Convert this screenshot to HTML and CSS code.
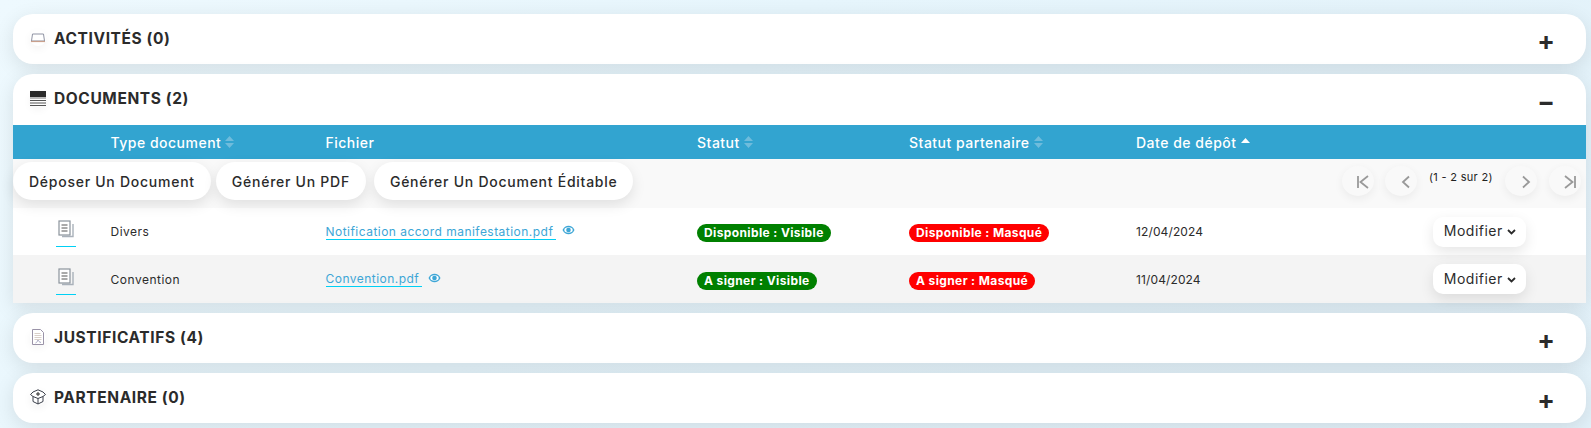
FILE: index.html
```html
<!DOCTYPE html>
<html lang="fr">
<head>
<meta charset="utf-8">
<title>Dossier</title>
<link rel="stylesheet" href="styles.css">
</head>
<body>
<main class="page">
  <section class="card">
    <header class="card-head">
      <span class="head-icon"><svg width="16" height="12" viewBox="0 0 16 12"><path d="M2.500 2h11l1 7h-13z" fill="#fff" stroke="#8f93a3" stroke-width="1"/><path d="M1 9.500h14" stroke="#c9a08c" stroke-width="1.200"/></svg></span>
      <h2 class="card-title">ACTIVITÉS (0)</h2>
      <span class="toggle">+</span>
    </header>
  </section>

  <section class="card card-open">
    <header class="card-head card-head-open">
      <span class="head-icon"><svg width="16" height="16" viewBox="0 0 16 16"><rect y="0" width="16" height="6" fill="#2b2b2b"/><rect y="6" width="16" height="2" fill="#bbb"/><path d="M0 9.500h16M0 12h16M0 14.500h16" stroke="#555" stroke-width="1"/></svg></span>
      <h2 class="card-title">DOCUMENTS (2)</h2>
      <span class="toggle toggle-minus">−</span>
    </header>
    <div class="grid table-head">
      <span></span>
      <span class="th">Type document <svg class="sort" width="9" height="12" viewBox="0 0 9 12"><path d="M4.500 0 9 5H0zM4.500 12 0 7h9z"/></svg></span>
      <span class="th">Fichier</span>
      <span class="th">Statut <svg class="sort" width="9" height="12" viewBox="0 0 9 12"><path d="M4.500 0 9 5H0zM4.500 12 0 7h9z"/></svg></span>
      <span class="th">Statut partenaire <svg class="sort" width="9" height="12" viewBox="0 0 9 12"><path d="M4.500 0 9 5H0zM4.500 12 0 7h9z"/></svg></span>
      <span class="th">Date de dépôt <svg class="sort-on" width="9" height="5" viewBox="0 0 9 5"><path d="M4.500 0 9 5H0z"/></svg></span>
    </div>
    <div class="toolbar">
      <div class="actions">
        <button class="btn">Déposer Un Document</button>
        <button class="btn">Générer Un PDF</button>
        <button class="btn btn-c">Générer Un Document Éditable</button>
      </div>
      <div class="pager">
        <span class="page-btn"><svg width="14" height="14" viewBox="0 0 14 14"><path d="M2 1v12M12 1 4.500 7l7.500 6" fill="none" stroke="#999" stroke-width="1.800"/></svg></span>
        <span class="page-btn"><svg width="14" height="14" viewBox="0 0 14 14"><path d="M10 1.500 4 7l6 5.500" fill="none" stroke="#999" stroke-width="1.800"/></svg></span>
        <span class="page-info">(1 - 2 sur 2)</span>
        <span class="page-btn"><svg width="14" height="14" viewBox="0 0 14 14"><path d="m4 1.500 6 5.500-6 5.500" fill="none" stroke="#999" stroke-width="1.800"/></svg></span>
        <span class="page-btn"><svg width="14" height="14" viewBox="0 0 14 14"><path d="M12 1v12M2 1l7.500 6L2 13" fill="none" stroke="#999" stroke-width="1.800"/></svg></span>
      </div>
    </div>
    <div class="grid row">
      <span class="doc-cell"><svg width="16" height="18" viewBox="0 0 16 18"><path d="M4 16.500h11V4" fill="none" stroke="#a9b1ba" stroke-width="1.400"/><rect x="1" y="1" width="11" height="14" fill="#fff" stroke="#8b939c" stroke-width="1.200"/><path d="M3.500 5h6M3.500 8h6M3.500 11h6" stroke="#555" stroke-width="1"/></svg></span>
      <span class="td">Divers</span>
      <span class="file"><a class="file-link" href="#">Notification accord manifestation.pdf</a><svg class="eye" width="13" height="10" viewBox="0 0 13 10"><path d="M.5 5C2 2 4 .7 6.500.7S11 2 12.500 5C11 8 9 9.300 6.500 9.300S2 8 .5 5z" fill="#3da6d6"/><ellipse cx="6.500" cy="5" rx="4.200" ry="2.800" fill="#fff"/><circle cx="6.500" cy="5" r="2.300" fill="#3da6d6"/></svg></span>
      <span><b class="badge badge-ok">Disponible : Visible</b></span>
      <span><b class="badge badge-no">Disponible : Masqué</b></span>
      <span class="td td-date">12/04/2024</span>
      <span class="row-action"><button class="modify">Modifier <svg class="chev" width="9" height="6" viewBox="0 0 9 6"><path d="m1 1 3.500 3.500L8 1" fill="none" stroke="#2b2b2b" stroke-width="1.800"/></svg></button></span>
    </div>
    <div class="grid row row-alt">
      <span class="doc-cell"><svg width="16" height="18" viewBox="0 0 16 18"><path d="M4 16.500h11V4" fill="none" stroke="#a9b1ba" stroke-width="1.400"/><rect x="1" y="1" width="11" height="14" fill="#fff" stroke="#8b939c" stroke-width="1.200"/><path d="M3.500 5h6M3.500 8h6M3.500 11h6" stroke="#555" stroke-width="1"/></svg></span>
      <span class="td">Convention</span>
      <span class="file"><a class="file-link" href="#">Convention.pdf</a><svg class="eye" width="13" height="10" viewBox="0 0 13 10"><path d="M.5 5C2 2 4 .7 6.500.7S11 2 12.500 5C11 8 9 9.300 6.500 9.300S2 8 .5 5z" fill="#3da6d6"/><ellipse cx="6.500" cy="5" rx="4.200" ry="2.800" fill="#fff"/><circle cx="6.500" cy="5" r="2.300" fill="#3da6d6"/></svg></span>
      <span><b class="badge badge-ok">A signer : Visible</b></span>
      <span><b class="badge badge-no">A signer : Masqué</b></span>
      <span class="td td-date">11/04/2024</span>
      <span class="row-action"><button class="modify">Modifier <svg class="chev" width="9" height="6" viewBox="0 0 9 6"><path d="m1 1 3.500 3.500L8 1" fill="none" stroke="#2b2b2b" stroke-width="1.800"/></svg></button></span>
    </div>
  </section>

  <section class="card">
    <header class="card-head">
      <span class="head-icon"><svg width="12" height="16" viewBox="0 0 12 16"><path d="M.5.500h8l3 3v12H.5z" fill="#fff" stroke="#9a93a8"/><path d="M2.500 4.500h6M2.500 6.500h7M2.500 8.500h7M2.500 10.500h7" stroke="#d9cfc8" stroke-width="1"/><path d="M3.500 14c1.500-.5 2-2 2.500-3 .5 1 1 2 3 2.500" fill="none" stroke="#8f8fb0" stroke-width=".8"/></svg></span>
      <h2 class="card-title">JUSTIFICATIFS (4)</h2>
      <span class="toggle">+</span>
    </header>
  </section>

  <section class="card">
    <header class="card-head">
      <span class="head-icon"><svg width="16" height="16" viewBox="0 0 16 16"><path d="M8 .8 13 3l2.500 2.500L13 7.500 8 9.500 3 7.500.5 5.500 3 3zM3 7.500v5L8 15l5-2.500v-5M8 9.500V15" fill="none" stroke="#3a3f4a" stroke-width="1"/><path d="M8 3v4M6 5h4" stroke="#2b2b2b" stroke-width="1"/></svg></span>
      <h2 class="card-title">PARTENAIRE (0)</h2>
      <span class="toggle">+</span>
    </header>
  </section>
</main>
</body>
</html>
```
FILE: styles.css
```css
* { box-sizing: border-box; }
html, body { margin: 0; height: 100%; }
body {
  background: linear-gradient(135deg, #eef9fe 0%, #e6f5fc 40%, #e2f1f9 100%);
  font-family: Inter, "Open Sans", sans-serif;
  color: #2b2b2b;
  overflow: hidden;
}
.page {
  display: flex;
  flex-direction: column;
  gap: 10px;
  padding: 14px 5px 0 13px;
}
.card {
  background: #fff;
  border-radius: 20px;
  box-shadow: 0 5px 20px rgba(0, 0, 0, .1);
}
.card-open { border-radius: 20px 20px 0 0; }
.card-head {
  height: 50px;
  display: flex;
  align-items: center;
  padding: 0 31px 2px 17px;
}
.card-head-open { height: 51px; }
.head-icon {
  width: 16px;
  height: 16px;
  margin-right: 8px;
  display: flex;
  align-items: center;
  justify-content: center;
  border-radius: 50%;
  box-shadow: 0 3px 8px rgba(0, 0, 0, .05);
  flex: none;
}
.card-title {
  margin: 0;
  font-size: 15.500px;
  font-weight: 700;
  letter-spacing: .6px;
  color: #2b2b2b;
}
.toggle {
  margin-left: auto;
  font-size: 26px;
  line-height: 20px;
  font-weight: 700;
  padding-top: 6px;
  color: #2b2b2b;
}
.grid {
  display: grid;
  grid-template-columns: 97.500px 215px 371.500px 212px 227px 297px 1fr;
  align-items: center;
}
.table-head {
  height: 34px;
  background: #32a4d0;
  color: #fff;
}
.th {
  display: flex;
  align-items: center;
  gap: 4px;
  font-size: 14px;
  font-weight: 500;
  letter-spacing: .5px;
  white-space: nowrap;
}
.sort { fill: #6fbcdc; }
.sort-on { fill: #fff; margin-bottom: 4px; }
.toolbar {
  height: 49px;
  background: #f9f9f9;
  display: flex;
  justify-content: space-between;
  align-items: flex-start;
  padding: 3px 5px 0 0;
}
.actions { display: flex; gap: 5px; }
.btn {
  height: 38px;
  border: 0;
  border-radius: 19px;
  background: #fff;
  box-shadow: 0 5px 14px rgba(0, 0, 0, .1);
  font: 500 14px Inter, "Open Sans", sans-serif;
  letter-spacing: .74px;
  color: #2b2b2b;
  white-space: nowrap;
  padding: 0 16px;
}
.btn-c { margin-left: 3px; }
.pager {
  display: flex;
  align-items: flex-start;
  gap: 12px;
  padding-top: 4px;
}
.page-btn {
  width: 32px;
  height: 30px;
  padding: 2px 0 0 9px;
  border-radius: 50%;
  background: #f9f9f9;
  box-shadow: 0 3px 10px rgba(0, 0, 0, .06);
  display: flex;
  align-items: center;
  justify-content: center;
}
.page-btn:first-child { margin-right: -1px; }
.page-info {
  font-size: 11px;
  letter-spacing: .3px;
  color: #222;
  margin-top: 4px;
  width: 64px;
  white-space: nowrap;
}
.row { height: 47px; background: #fff; }
.row-alt { height: 48px; background: #f4f4f4; }
.doc-cell {
  justify-self: start;
  width: 20px;
  height: 27px;
  margin: 4px 0 0 43px;
  border-bottom: 1px solid #00d0f5;
  display: flex;
  justify-content: center;
  align-items: flex-start;
}
.td { font-size: 12px; letter-spacing: .5px; color: #2b2b2b; }
.td-date { letter-spacing: .12px; }
.file {
  display: flex;
  align-items: center;
  gap: 6px;
}
.file-link {
  font-size: 12px;
  letter-spacing: .47px;
  color: #3da6d6;
  text-decoration: none;
  border-bottom: 1px solid #00d0f5;
  padding-right: 3px;
}
.eye { margin-bottom: 3px; }
.badge {
  display: inline-block;
  height: 18px;
  line-height: 18px;
  border-radius: 9px;
  padding: 0 7px;
  font-size: 12px;
  font-weight: 700;
  color: #fff;
  letter-spacing: .38px;
  white-space: nowrap;
}
.badge-ok { background: #008000; }
.badge-no { background: #f00; }
.row-action { display: flex; }
.modify {
  width: 93px;
  height: 30px;
  border: 0;
  border-radius: 10px;
  background: #fff;
  box-shadow: 0 5px 14px rgba(0, 0, 0, .1);
  font: 400 14px Inter, "Open Sans", sans-serif;
  letter-spacing: .5px;
  color: #2b2b2b;
  padding: 0 0 2px 1px;
}
.chev { vertical-align: 1px; }
```
